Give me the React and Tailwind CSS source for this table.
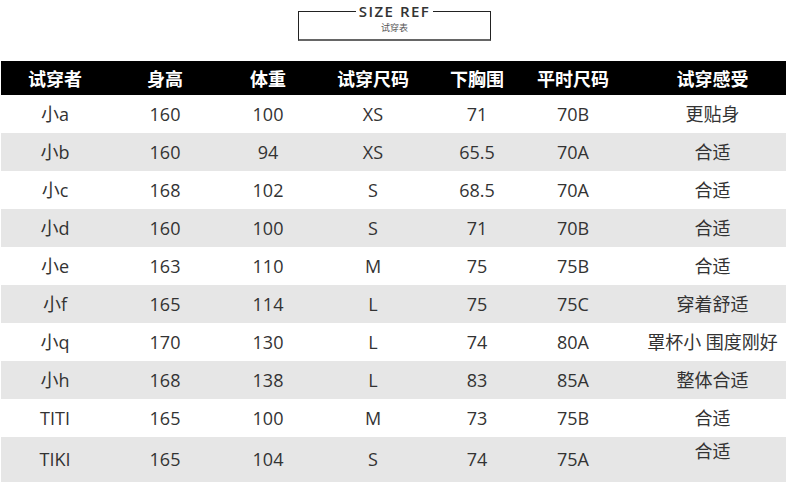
const rows = [
  ["小a", "160", "100", "XS", "71", "70B", "更贴身"],
  ["小b", "160", "94", "XS", "65.5", "70A", "合适"],
  ["小c", "168", "102", "S", "68.5", "70A", "合适"],
  ["小d", "160", "100", "S", "71", "70B", "合适"],
  ["小e", "163", "110", "M", "75", "75B", "合适"],
  ["小f", "165", "114", "L", "75", "75C", "穿着舒适"],
  ["小q", "170", "130", "L", "74", "80A", "罩杯小 围度刚好"],
  ["小h", "168", "138", "L", "83", "85A", "整体合适"],
  ["TITI", "165", "100", "M", "73", "75B", "合适"],
];

const head = ["试穿者", "身高", "体重", "试穿尺码", "下胸围", "平时尺码", "试穿感受"];

const cols = "grid grid-cols-[108px_112px_94px_116px_92px_100px_163px] justify-items-center items-center";

export default function App() {
  return (
    <div className="w-[791px] h-[487px] bg-white text-[#333] font-['Open_Sans','Noto_Sans_CJK_SC',sans-serif] overflow-hidden">
      <div className="flex justify-center pt-[4px] pr-[2px]">
        <fieldset className="w-[193px] h-[37px] border border-[#222] border-b-2 border-b-[#666] flex flex-col items-center">
          <legend className="mx-auto px-[3px] text-[15px] leading-[15px] font-semibold tracking-[1.5px] text-[#333]">
            SIZE REF
          </legend>
          <div className="text-[9px] leading-[10px] mt-[4px] text-[#555] font-['Noto_Sans_CJK_SC',sans-serif]">试穿表</div>
        </fieldset>
      </div>

      <div className="mt-[20px] ml-[1px] w-[785px]">
        <div className={`${cols} h-[34px] bg-black text-white text-[18px] font-bold font-['Noto_Sans_CJK_SC',sans-serif]`}>
          {head.map((h, i) => (
            <div key={i} className={i === 6 ? "pl-[16px]" : ""}>{h}</div>
          ))}
        </div>
        {rows.map((r, ri) => (
          <div key={ri} className={`${cols} h-[38px] text-[18px] ${ri % 2 === 1 ? "bg-[#e6e6e6]" : "bg-white"}`}>
            {r.map((c, i) => (
              <div key={i} className={i === 6 ? "pl-[16px]" : ""}>{c}</div>
            ))}
          </div>
        ))}
        <div className={`${cols} h-[45px] text-[18px] bg-[#e6e6e6]`}>
          <div>TIKI</div>
          <div>165</div>
          <div>104</div>
          <div>S</div>
          <div>74</div>
          <div>75A</div>
          <div className="pl-[16px] self-start pt-[1px]">合适</div>
        </div>
      </div>
    </div>
  );
}
